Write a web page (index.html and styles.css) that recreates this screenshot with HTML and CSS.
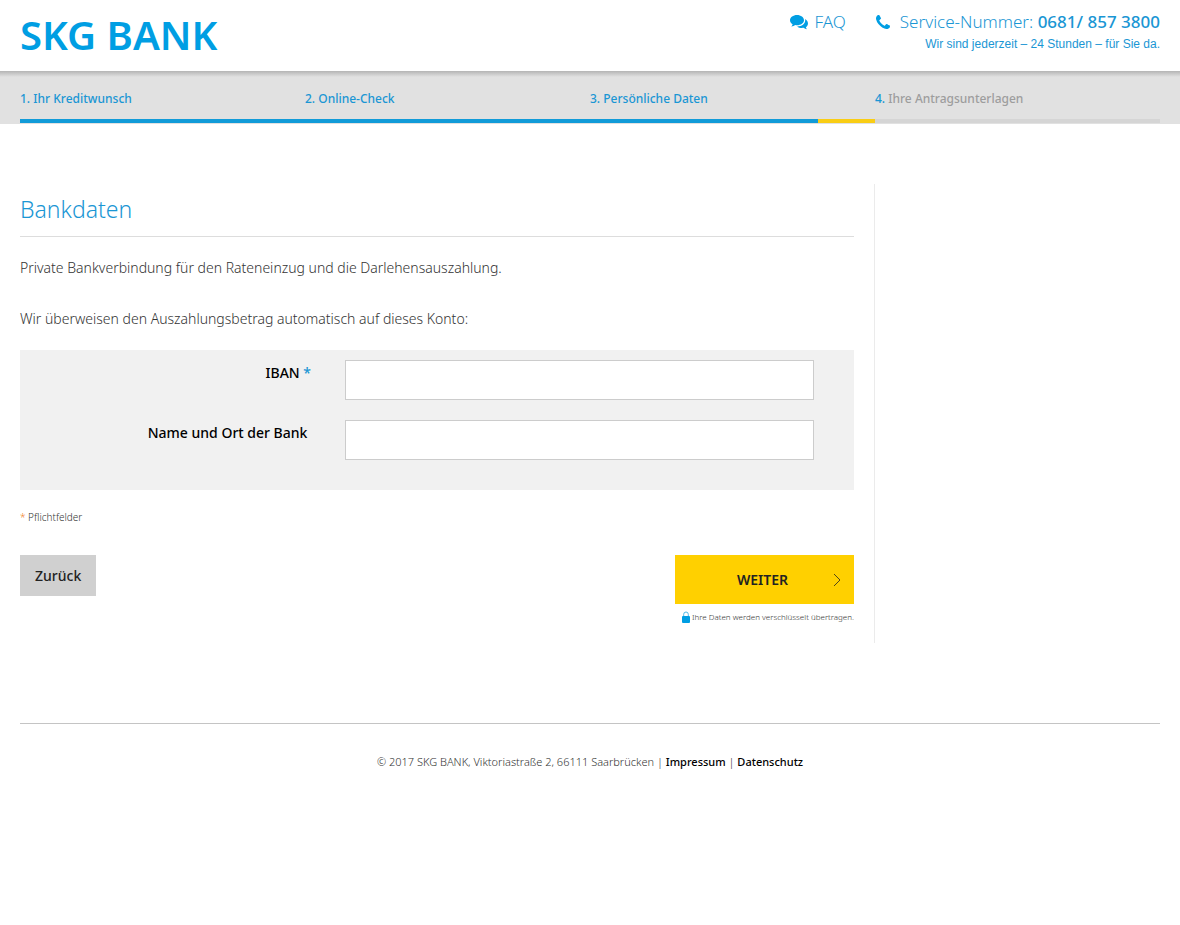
FILE: index.html
```html
<!DOCTYPE html>
<html lang="de">
  <head>
    <meta charset="UTF-8" />
    <meta name="viewport" content="width=device-width, initial-scale=1.0" />
    <title>SKG BANK - Bankdaten</title>
    <link rel="stylesheet" href="styles.css">
  </head>
  <body>
    <header class="header">
      <a class="logo" href="#">SKG BANK</a>
      <div class="service">
        <div class="service-links">
          <a class="faq" href="#">
            <svg class="icon-comments" viewBox="0 0 18 15" aria-hidden="true">
              <path d="M7 0C3.100 0 0 2.300 0 5.200c0 1.700 1 3.100 2.600 4.100-.2.900-.7 1.500-1.300 2.100 1.700-.1 2.900-.7 3.900-1.400.6.100 1.200.2 1.800.2 3.900 0 7-2.200 7-5S10.900 0 7 0z" />
              <path d="M15.100 4.100c.8 3.900-2.800 7.300-8 7.300 1.200 1 3 1.500 4.900 1.500.5 0 1 0 1.500-.1 1 .8 2.200 1.200 3.500 1.400-.6-.6-1-1.200-1.100-2 2.900-1.800 2.900-6.100-.8-8.100z" />
            </svg>
            <span>FAQ</span>
          </a>
          <a class="phone" href="#">
            <svg class="icon-phone" viewBox="0 0 1408 1408" aria-hidden="true">
              <path d="M1408 1112q0 27-10 70.500t-21 68.500q-21 50-122 106-94 51-186 51-27 0-53-3.500t-57.500-12.500-47-14.500-55.500-20.500-49-18q-98-35-175-83-127-79-264-216t-216-264q-48-77-83-175-3-9-18-49t-20.500-55.500-14.500-47-12.500-57.500-3.500-53q0-92 51-186 56-101 106-122 25-11 68.500-21t70.500-10q14 0 21 3 18 6 53 76 11 19 30 54t35 63.500 31 53.500q3 4 17.500 25t21.500 35.500 7 28.500q0 20-28.500 50t-62 55-62 53-28.500 46q0 9 5 22.500t8.500 20.500 14 24 11.500 19q76 137 174 235t235 174q2 1 19 11.500t24 14 20.500 8.500 22.500 5q18 0 46-28.500t53-62 55-62 50-28.500q14 0 28.500 7t35.500 21.500 25 17.500q25 15 53.500 31t63.500 35 54 30q70 35 76 53 3 7 3 21z" />
            </svg>
            <span>Service-Nummer: <strong>0681/ 857 3800</strong></span>
          </a>
        </div>
        <p class="hours">Wir sind jederzeit – 24 Stunden – für Sie da.</p>
      </div>
    </header>

    <nav class="steps">
      <ol class="step-list">
        <li><span class="nr">1.</span> Ihr Kreditwunsch</li>
        <li><span class="nr">2.</span> Online-Check</li>
        <li><span class="nr">3.</span> Persönliche Daten</li>
        <li class="open"><span class="nr">4.</span> Ihre Antragsunterlagen</li>
      </ol>
      <div class="progress">
        <div class="progress-done" style="width: 70%"></div>
        <div class="progress-current" style="width: 5%"></div>
      </div>
    </nav>

    <div class="content">
      <main class="main">
        <h1>Bankdaten</h1>
        <p>Private Bankverbindung für den Rateneinzug und die Darlehensauszahlung.</p>
        <p>Wir überweisen den Auszahlungsbetrag automatisch auf dieses Konto:</p>
        <form>
          <div class="fields">
            <div class="form-row">
              <label for="iban">IBAN <span class="required">*</span></label>
              <input id="iban" name="iban" type="text" />
            </div>
            <div class="form-row">
              <label for="bank">Name und Ort der Bank&nbsp;</label>
              <input id="bank" name="bank" type="text" />
            </div>
          </div>
          <p class="hint"><span class="hint-star">*</span> Pflichtfelder</p>
          <div class="buttons">
            <button class="btn-back" type="button">Zurück</button>
            <div class="submit">
              <button class="btn-next" type="submit">
                <span>WEITER</span>
                <svg class="icon-arrow" viewBox="0 0 8 14" aria-hidden="true">
                  <path d="M1 1l6 6-6 6" />
                </svg>
              </button>
              <p class="secure">
                <svg class="icon-lock" viewBox="0 0 8 12" aria-hidden="true">
                  <path class="shackle" d="M1.700 6V3.300a2.300 2.300 0 0 1 4.600 0V6" />
                  <rect y="5" width="8" height="7" rx="1" />
                </svg>
                <span>Ihre Daten werden verschlüsselt übertragen.</span>
              </p>
            </div>
          </div>
        </form>
      </main>
      <aside class="sidebar"></aside>
    </div>

    <footer class="footer">
      © 2017 SKG BANK, Viktoriastraße 2, 66111 Saarbrücken |
      <a href="#">Impressum</a> | <a href="#">Datenschutz</a>
    </footer>
  </body>
</html>
```
FILE: styles.css
```css
* {
  box-sizing: border-box;
}
body {
  margin: 0;
  font-family: "Noto Sans", "Open Sans", sans-serif;
  font-size: 14px;
  font-weight: 300;
  line-height: 20px;
  color: #333;
  background: #fff;
}
p {
  margin: 0;
}
a {
  color: inherit;
  text-decoration: none;
}

/* header */
.header {
  display: flex;
  justify-content: space-between;
  height: 71px;
  padding: 10px 20px;
  color: #009ee3;
}
.logo {
  font-size: 40px;
  font-weight: 600;
  line-height: 50px;
}
.service-links {
  display: flex;
  justify-content: flex-end;
  gap: 30px;
  font-size: 17px;
  line-height: 24px;
  color: #1a96d4;
}
.faq,
.phone {
  display: flex;
  align-items: center;
  gap: 6px;
}
.phone {
  gap: 10px;
}
.phone strong {
  font-weight: 500;
}
.icon-comments {
  width: 18px;
  height: 15px;
  fill: #009ee3;
}
.icon-phone {
  width: 14px;
  height: 14px;
  fill: #009ee3;
}
.hours {
  font-family: "Liberation Sans", Arial, sans-serif;
  font-size: 12px;
  font-weight: 400;
  text-align: right;
  color: #1a96d4;
}

/* steps */
.steps {
  padding: 18px 20px 1px;
  background: linear-gradient(#b4b4b4, #e1e1e1 6px);
}
.step-list {
  display: grid;
  grid-template-columns: repeat(4, 1fr);
  margin: 0 0 10px;
  padding: 0;
  list-style: none;
  font-size: 12px;
  font-weight: 500;
  color: #1a96d4;
}
.step-list .open {
  color: #9d9d9d;
}
.step-list .nr {
  color: #1a96d4;
}
.progress {
  display: flex;
  height: 4px;
  background: #d5d5d5;
}
.progress-done {
  background: #119bd8;
}
.progress-current {
  background: #f9cd15;
}

/* content */
.content {
  display: grid;
  grid-template-columns: 3fr 1fr;
  margin: 60px 20px 80px;
}
.main {
  padding: 8px 20px 16px 0;
  border-right: 1px solid #ebebeb;
}
h1 {
  margin: 0 0 21px;
  padding-bottom: 10px;
  border-bottom: 1px solid #ddd;
  font-size: 23px;
  font-weight: 300;
  line-height: 34px;
  color: #1a96d4;
}
.main > p {
  margin-bottom: 31px;
}
.main > p + p {
  margin-bottom: 21px;
}
.fields {
  display: grid;
  gap: 20px;
  padding: 10px 40px 30px 0;
  background: #f1f1f1;
}
.form-row {
  display: grid;
  grid-template-columns: 291px 1fr;
  gap: 34px;
}
.form-row label {
  padding-top: 3px;
  font-weight: 500;
  text-align: right;
  color: #000;
}
.form-row input {
  width: 100%;
  height: 40px;
  padding: 0 10px;
  border: 1px solid #ccc;
  font: inherit;
  background: #fff;
}
.required {
  color: #1a96d4;
}
.hint {
  margin: 17px 0 28px;
  font-size: 10px;
}
.hint-star {
  color: #f07d1a;
}
.buttons {
  display: flex;
  justify-content: space-between;
  align-items: flex-start;
}
button {
  border: 0;
  font: inherit;
  font-weight: 500;
  color: #222;
  cursor: pointer;
}
.btn-back {
  height: 41px;
  padding: 0 15px;
  background: #d0d0d0;
}
.btn-next {
  display: grid;
  grid-template-columns: 1fr auto 1fr;
  align-items: center;
  width: 100%;
  height: 49px;
  padding: 0 13px 0 9px;
  font-weight: 600;
  background: #ffd000;
}
.btn-next span {
  grid-column: 2;
}
.icon-arrow {
  width: 8px;
  height: 14px;
  justify-self: end;
  fill: none;
  stroke: #222;
  stroke-width: 0.8;
}
.submit {
  min-width: 179px;
}
.secure {
  display: flex;
  align-items: center;
  justify-content: flex-end;
  gap: 2px;
  padding-top: 3px;
  font-size: 8px;
}
.icon-lock {
  width: 8px;
  height: 12px;
  fill: #009ee3;
}
.icon-lock .shackle {
  fill: none;
  stroke: #4db8e8;
}

/* footer */
.footer {
  margin: 0 20px;
  padding-top: 28px;
  border-top: 1px solid #c4c4c4;
  font-size: 11px;
  text-align: center;
}
.footer a {
  font-weight: 500;
  color: #000;
}
```
